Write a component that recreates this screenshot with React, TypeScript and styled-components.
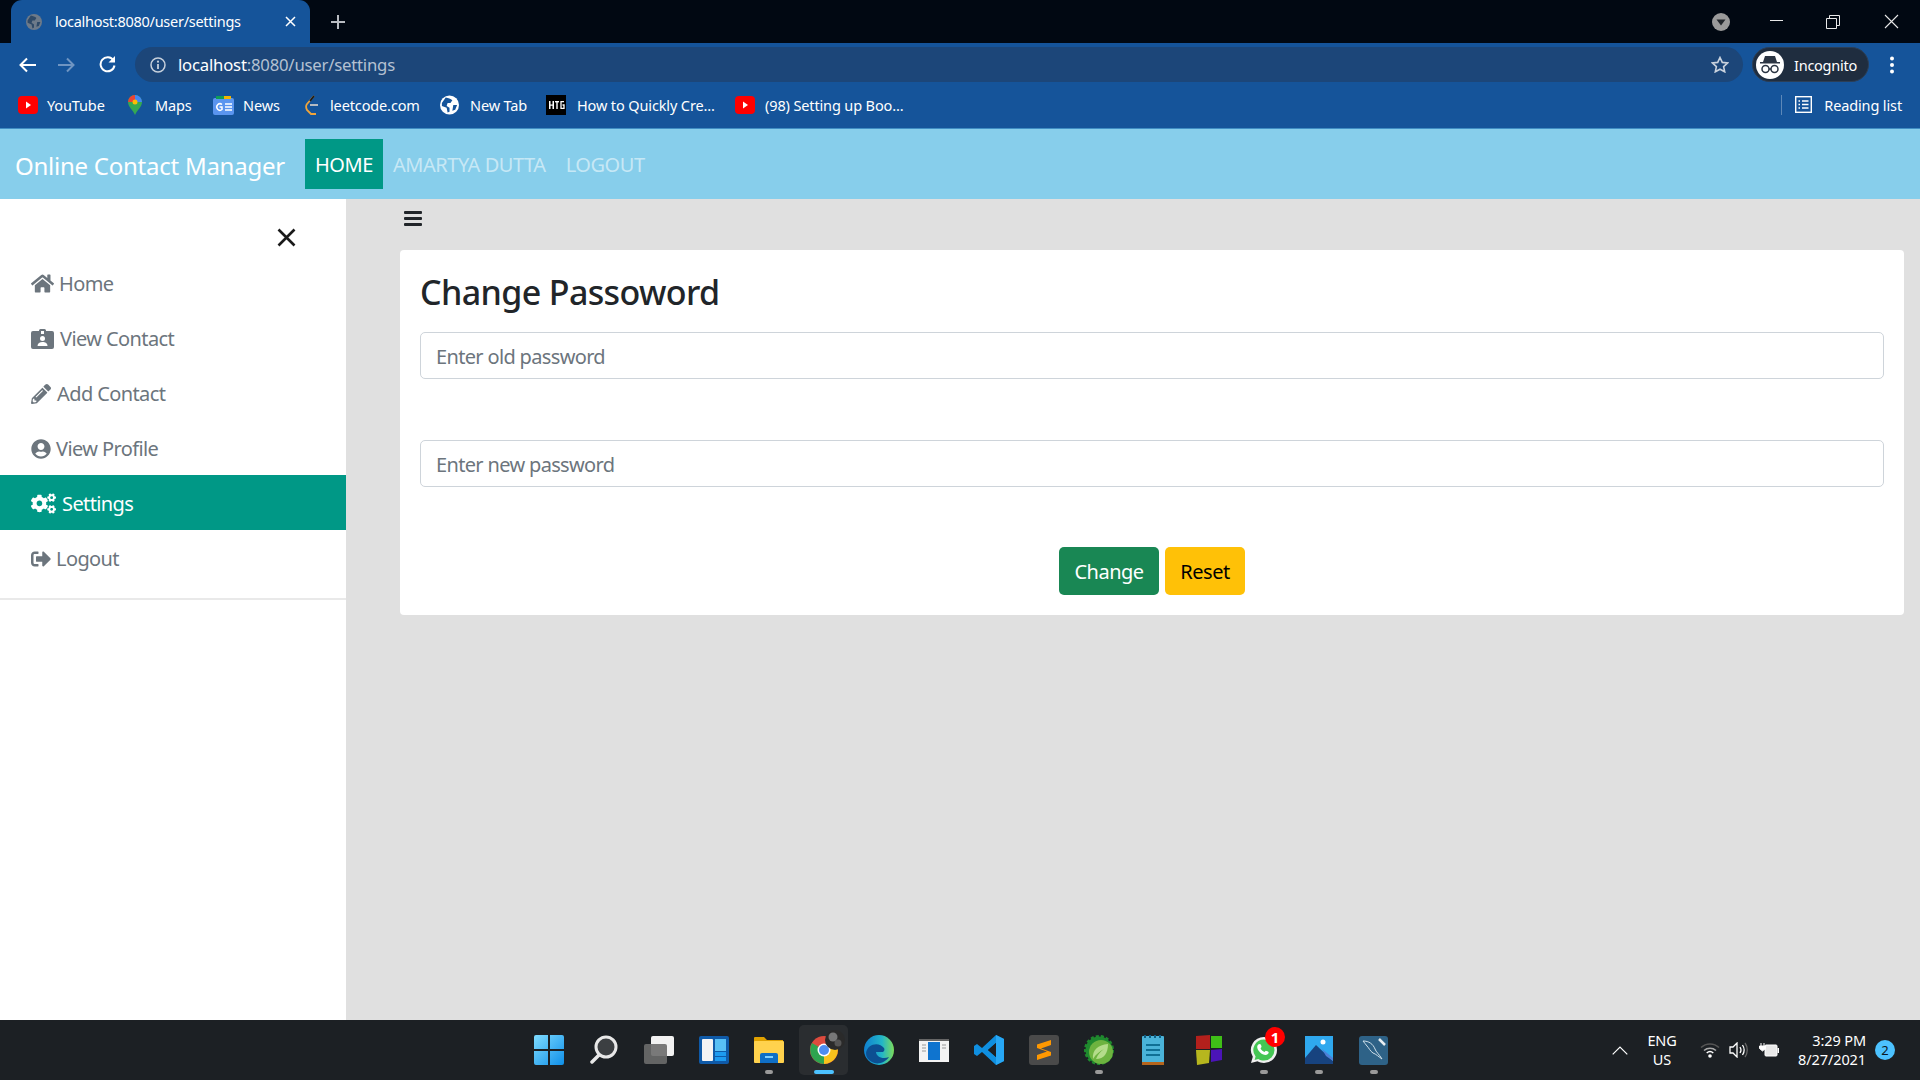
import React from "react";
import styled, { createGlobalStyle } from "styled-components";
import { FaHome, FaPencilAlt, FaUserCircle, FaCogs, FaSignOutAlt } from "react-icons/fa";

const Global = createGlobalStyle`
  html, body { margin: 0; padding: 0; background: #e0e0e0; }
  body { font-family: "Noto Sans", "Open Sans", sans-serif; overflow: hidden; }
  * { box-sizing: border-box; }
  input::placeholder { color: #6c757d; opacity: 1; }
`;

const Page = styled.div`
  width: 1920px; height: 1080px; display: flex; flex-direction: column; overflow: hidden;
`;
const TabStrip = styled.div`
  height: 43px; background: #010812; display: flex; align-items: stretch; padding-left: 11px; flex: none;
`;
const Tab = styled.div`
  width: 299px; background: #15549a; border-radius: 11px 11px 0 0; display: flex; align-items: center;
  padding: 0 14px 0 15px; color: #fff; font-size: 14.5px; letter-spacing: -0.27px;
`;
const TabTitle = styled.span`
  margin-left: 13px; flex: 1; white-space: nowrap; padding-bottom: 2px;
`;
const NewTab = styled.div`
  margin-left: 21px; width: 14px; display: flex; align-items: center; color: #b8bcc2;
`;
const WindowArea = styled.div`
  margin-left: auto; display: flex; align-items: center; padding-right: 21px;
`;
const WinBtn = styled.div<{ $gap?: number }>`
  display: flex; margin-left: ${p => p.$gap ?? 0}px;
`;
const Toolbar = styled.div`
  height: 43px; background: #15549a; display: flex; align-items: center; padding-left: 19px; flex: none;
`;
const NavIcon = styled.div<{ $ml?: number }>`
  display: flex; margin-left: ${p => p.$ml ?? 0}px;
`;
const Omni = styled.div`
  margin-left: 19px; width: 1608px; height: 35px; background: #1c4679; border-radius: 18px; display: flex;
  align-items: center; padding: 0 14px 0 15px;
`;
const Url = styled.div`
  margin-left: 12px; font-size: 16.7px; letter-spacing: -0.2px; color: #b4c1d2; white-space: nowrap; flex: 1;
`;
const UrlHost = styled.span` color: #fff; `;
const Pill = styled.div`
  margin-left: 9px; width: 117px; height: 35px; border-radius: 18px; background: #1f2d3f; border: 1px solid #2c3e55;
  display: flex; align-items: center; padding-left: 3px; color: #fff; font-size: 14.5px; letter-spacing: -0.25px;
`;
const Avatar = styled.div`
  width: 28px; height: 28px; border-radius: 50%; background: #fff; display: flex; align-items: center; justify-content: center; margin-right: 10px; flex: none;
`;
const Kebab = styled.div`
  margin-left: 20px; display: flex;
`;
const Bookmarks = styled.div`
  height: 43px; background: #15549a; border-bottom: 1px solid #3f8ec4; display: flex; align-items: center; padding: 0 18px 5px; color: #fff;
  font-size: 14.5px; letter-spacing: -0.13px; flex: none;
`;
const Bookmark = styled.div<{ $w: number }>`
  width: ${p => p.$w}px; display: flex; align-items: center; white-space: nowrap; flex: none;
`;
const BmIcon = styled.div<{ $w: number }>`
  width: ${p => p.$w}px; display: flex; justify-content: center; flex: none;
`;
const BmLabel = styled.span<{ $ml: number }>`
  margin-left: ${p => p.$ml}px;
`;
const Reading = styled.div`
  margin-left: auto; display: flex; align-items: center; height: 20px; border-left: 1px solid #5d88b8; padding-left: 13px;
`;
const ReadingText = styled.span` margin-left: 12px; `;

const Navbar = styled.header`
  height: 70px; background: #87ceeb; display: flex; align-items: center; padding: 0 0 0 15px; flex: none;
`;
const Brand = styled.div`
  font-size: 24px; color: #fff; width: 290px; letter-spacing: -0.25px; white-space: nowrap; padding-top: 2px;
`;
const NavLink = styled.div<{ $active?: boolean }>`
  height: 50px; display: flex; align-items: center; padding: 0 10px; font-size: 20px; letter-spacing: -0.45px;
  color: ${p => p.$active ? "#fff" : "rgba(255,255,255,.55)"}; background: ${p => p.$active ? "#009886" : "transparent"};
`;
const Body = styled.div`
  flex: 1; display: flex; min-height: 0;
`;
const Side = styled.aside`
  width: 346px; background: #fff; flex: none; display: flex; flex-direction: column;
`;
const CloseRow = styled.div`
  height: 56px; display: flex; justify-content: flex-end; align-items: flex-end; padding: 0 50px 8px 0;
`;
const Menu = styled.nav`
  border-bottom: 2px solid #e9e9e9; padding-bottom: 13px;
`;
const Item = styled.div<{ $active?: boolean; $gap?: number }>`
  height: 55px; display: flex; align-items: center; padding: 2px 0 0 31px; font-size: 20px; letter-spacing: -0.6px;
  color: ${p => p.$active ? "#fff" : "#6c757d"}; background: ${p => p.$active ? "#009886" : "transparent"};
  svg { flex: none; margin-right: ${p => p.$gap ?? 5}px; }
`;
const Main = styled.main`
  flex: 1; background: #e0e0e0; padding: 12px 16px 0 54px; display: flex; flex-direction: column;
`;
const Burger = styled.div`
  height: 15px; width: 18px; margin-left: 4px; display: flex; flex-direction: column; justify-content: space-between; margin-bottom: 24px;
`;
const BurgerBar = styled.span`
  display: block; height: 3px; background: #212529; border-radius: 1px;
`;
const Card = styled.section`
  height: 365px; background: #fff; border-radius: 4px; padding: 20px 20px; display: flex; flex-direction: column;
`;
const Title = styled.h2`
  margin: 0; font-size: 34px; font-weight: 500; color: #212529; line-height: 44px; letter-spacing: -0.62px; height: 62px; flex: none;
`;
const Input = styled.input<{ $mb: number }>`
  height: 47px; width: 100%; border: 1px solid #ced4da; border-radius: 5px; padding: 2px 15px 0; font-size: 20px; letter-spacing: -0.66px;
  font-family: inherit; margin-bottom: ${p => p.$mb}px; background: #fff; flex: none;
`;
const Buttons = styled.div`
  display: flex; justify-content: center; gap: 6px;
`;
const Btn = styled.button<{ $bg: string; $fg: string; $w: number }>`
  height: 48px; width: ${p => p.$w}px; border: 0; border-radius: 5px; background: ${p => p.$bg}; color: ${p => p.$fg};
  font: inherit; font-size: 20px; letter-spacing: -0.5px; padding: 1px 0 0;
`;
const Taskbar = styled.footer`
  height: 60px; background: #1c2024; display: flex; align-items: center; flex: none; padding-left: 521px;
`;
const Slot = styled.div<{ $active?: boolean }>`
  width: 55px; height: 52px; display: flex; align-items: center; justify-content: center; position: relative; flex: none;
  &::before {
    content: ""; position: absolute; top: 1px; bottom: 1px; left: 3px; right: 3px; border-radius: 5px;
    background: ${p => p.$active ? "#2a2d30" : "transparent"};
  }
  svg { position: relative; }
`;
const Dot = styled.span<{ $active?: boolean }>`
  position: absolute; bottom: 2px; left: 50%; transform: translateX(-50%); height: 4px; border-radius: 2px;
  width: ${p => p.$active ? 20 : 8}px; background: ${p => p.$active ? "#4cc2ff" : "#9a9a9a"};
`;
const Badge = styled.span`
  position: absolute; top: 3px; right: 6px; width: 20px; height: 20px; border-radius: 50%; background: #f00; color: #fff;
  font-size: 15px; font-weight: 700; display: flex; align-items: center; justify-content: center;
`;
const Tray = styled.div`
  margin-left: auto; display: flex; align-items: center; color: #fff; font-size: 14.5px; letter-spacing: -0.1px; line-height: 19px; padding-right: 25px;
`;
const TrayIcon = styled.div<{ $ml: number }>`
  display: flex; margin-left: ${p => p.$ml}px;
`;
const Lang = styled.div`
  text-align: center; margin-left: 16px; width: 36px;
`;
const Clock = styled.div`
  text-align: right; margin-left: 19px; white-space: nowrap;
`;
const Notif = styled.div`
  width: 20px; height: 20px; border-radius: 50%; background: #4cc2ff; color: #0b1a24; margin-left: 9px; font-size: 13px;
  display: flex; align-items: center; justify-content: center;
`;

const Yt = () => (
  <svg width="20" height="20" viewBox="0 0 20 20"><rect y="1" width="20" height="18" rx="4" fill="#f00"/><path d="M8 6.500l5 3.500-5 3.500z" fill="#fff"/></svg>
);
const Globe = ({ c = "#fff", s = 20, land = "#15549a" }: { c?: string; s?: number; land?: string }) => (
  <svg width={s} height={s} viewBox="0 0 20 20"><circle cx="10" cy="10" r="10" fill={c}/><path d="M6 2c3 1 5 1 7 3l-2 3-3 0-1 3 3 2 0 4-2 1-1-5-5-2 0-3zM14 10l4 0-2 5-3 1z" fill={land}/></svg>
);

const icons: Record<string, React.ReactNode> = {
  start: (
    <svg width="30" height="30" viewBox="0 0 30 30"><defs><linearGradient id="w" x1="0" y1="0" x2="1" y2="1"><stop offset="0" stopColor="#7fdcff"/><stop offset="1" stopColor="#0f8fe8"/></linearGradient></defs><path d="M0 2a2 2 0 0 1 2-2h12v14H0zM16 0h12a2 2 0 0 1 2 2v12H16zM0 16h14v14H2a2 2 0 0 1-2-2zM16 16h14v12a2 2 0 0 1-2 2H16z" fill="url(#w)"/></svg>
  ),
  search: (
    <svg width="28" height="30" viewBox="0 0 28 30"><circle cx="16" cy="12" r="10" fill="#3c3f42" stroke="#e8e8e8" strokeWidth="3"/><path d="M9 20l-7 7" stroke="#e8e8e8" strokeWidth="3.5" strokeLinecap="round"/></svg>
  ),
  task: (
    <svg width="30" height="28" viewBox="0 0 30 28"><rect x="7" y="0" width="23" height="20" rx="2" fill="#f2f2f2"/><rect x="0" y="8" width="23" height="20" rx="2" fill="#6b6b6b" fillOpacity=".9"/></svg>
  ),
  widgets: (
    <svg width="30" height="28" viewBox="0 0 30 28"><rect width="30" height="28" rx="2" fill="#0f5aa8"/><rect x="3" y="3" width="11" height="22" rx="1" fill="#f4f4f4"/><rect x="16" y="3" width="11" height="12" fill="#58c0f5"/><rect x="16" y="16" width="11" height="4" fill="#1d9bf0"/><rect x="16" y="21" width="11" height="4" fill="#1d9bf0"/></svg>
  ),
  folder: (
    <svg width="32" height="28" viewBox="0 0 32 28"><path d="M1 2a1 1 0 0 1 1-1h9l3 3h16v5H1z" fill="#e0a100"/><rect x="1" y="5" width="30" height="22" rx="1" fill="#ffd24d"/><path d="M9 17h14a2 2 0 0 1 2 2v8H7v-8a2 2 0 0 1 2-2z" fill="#0f6fc6"/><rect x="12" y="20" width="8" height="2" fill="#7fd0ff"/></svg>
  ),
  chrome: (
    <svg width="44" height="44" viewBox="0 0 44 44"><circle cx="22" cy="22" r="14" fill="#dd4b3e"/><path d="M22 22L34 15A14 14 0 0 1 22 36z" fill="#f8c21c"/><path d="M22 22L22 36A14 14 0 0 1 10 15z" fill="#2ea44f"/><circle cx="22" cy="22" r="6.5" fill="#fff"/><circle cx="22" cy="22" r="5" fill="#4d8df0"/><circle cx="33" cy="12" r="10" fill="#2a2a2a"/><circle cx="31" cy="9" r="4.500" fill="#777"/><circle cx="36" cy="15" r="3.500" fill="#555"/></svg>
  ),
  edge: (
    <svg width="30" height="30" viewBox="0 0 30 30"><defs><linearGradient id="e" x1="0" y1="0" x2="1" y2="0"><stop offset="0" stopColor="#0f7fd0"/><stop offset=".6" stopColor="#22b6c8"/><stop offset="1" stopColor="#7ddc5a"/></linearGradient></defs><circle cx="15" cy="15" r="15" fill="url(#e)"/><path d="M2 18C3 9 15 6 20 13c1 2 0 3-1 4h-7c0 4 6 8 13 5-4 6-12 8-17 5C4 25 2 22 2 18z" fill="#0c4f92"/></svg>
  ),
  store: (
    <svg width="30" height="23" viewBox="0 0 30 23"><rect width="30" height="23" fill="#f3f3f3"/><rect width="30" height="2" fill="#666"/><rect x="9" y="3" width="12" height="18" fill="#0f74cf"/><path d="M3 6h4M3 9h4M3 12h4M23 6h4M23 9h4" stroke="#999"/></svg>
  ),
  vscode: (
    <svg width="30" height="30" viewBox="0 0 30 30"><path d="M22 0l8 4v22l-8 4L8 17l-5 4-3-2v-8l3-2 5 4zM22 8l-8 7 8 7z" fill="#0f8fe0"/><path d="M22 0l8 4v22l-8 4z" fill="#27a7f5"/><path d="M22 8l-8 7 8 7z" fill="#1c2024"/></svg>
  ),
  sublime: (
    <svg width="30" height="30" viewBox="0 0 30 30"><rect width="30" height="30" rx="3" fill="#4a4a4a"/><path d="M22 5v5L12 13.500 22 17v3.500L8 25v-5l10-3.500L8 13V9.500z" fill="#ff9800"/></svg>
  ),
  spring: (
    <svg width="30" height="30" viewBox="0 0 30 30"><circle cx="15" cy="15" r="13.500" fill="#1f8a2e" stroke="#1f8a2e" strokeWidth="3" strokeDasharray="3 2"/><circle cx="17" cy="17" r="12" fill="#6db33f"/><path d="M9 24c-1-9 5-14 15-15 0 9-4 15-12 15 2-5 5-8 8-10-4 2-8 5-11 10z" fill="#b4dc8a"/></svg>
  ),
  notes: (
    <svg width="23" height="30" viewBox="0 0 23 30"><rect y="1" width="22" height="28" rx="1" fill="#4ab3d9"/><rect y="27" width="22" height="3" fill="#b5651d"/><path d="M4 10h14M4 15h14M4 20h14" stroke="#0f6f95" strokeWidth="2"/><path d="M3 0v3M8 0v3M13 0v3M18 0v3" stroke="#0f5f85" strokeWidth="2"/></svg>
  ),
  colors: (
    <svg width="28" height="30" viewBox="0 0 28 30"><path d="M1 1l14-1v14H1z" fill="#b3201c"/><path d="M16 1l11 0v12H16z" fill="#3fbf17"/><path d="M1 15h14l-1 13-12 2z" fill="#b6b61e"/><path d="M16 15l11-1v11l-11 2z" fill="#4b14b8"/></svg>
  ),
  whatsapp: (
    <svg width="28" height="28" viewBox="0 0 28 28"><path d="M14 1a13 13 0 0 1 0 26c-2.500 0-4.500-.5-6.500-1.700L1 27l1.800-6.300A13 13 0 0 1 14 1z" fill="#f0f0f0"/><path d="M14 3.500a10.500 10.500 0 0 1 0 21c-2.200 0-4-.6-5.700-1.600l-3.700 1 1-3.500A10.500 10.500 0 0 1 14 3.500z" fill="#45c654"/><path d="M10 8c1 0 1.500 2.500 1.500 3l-1 1.200c.8 1.800 2 3 4 3.800l1.200-1.200c.7 0 3 1 3 1.500 0 2-2 2.700-3 2.700-4 0-8.500-4.500-8.500-8 0-1.200.8-3 2.800-3z" fill="#fff"/></svg>
  ),
  photos: (
    <svg width="28" height="28" viewBox="0 0 28 28"><rect width="28" height="28" fill="#2fa8ee"/><circle cx="18" cy="6" r="2.500" fill="#fff"/><path d="M0 22L11 9l17 16v3H0z" fill="#17437f"/><path d="M17 13l11 9v3l-7-5z" fill="#4e7fd6"/></svg>
  ),
  mysql: (
    <svg width="29" height="29" viewBox="0 0 29 29"><rect width="29" height="29" rx="3" fill="#2e6287"/><path d="M4 5c6 0 10 3 12 8 1 3 4 5 7 10-3-2-6-5-9-6-3-2-4-5-6-7-1-2-3-3-4-5z" fill="none" stroke="#cfe0ea" strokeWidth="1"/><path d="M20 3l6 6" stroke="#e8eef2" strokeWidth="2.500"/></svg>
  ),
};

const taskItems: { k: string; dot?: boolean; active?: boolean; badge?: string }[] = [
  { k: "start" }, { k: "search" }, { k: "task" }, { k: "widgets" },
  { k: "folder", dot: true }, { k: "chrome", active: true, dot: true }, { k: "edge" }, { k: "store" },
  { k: "vscode" }, { k: "sublime" }, { k: "spring", dot: true }, { k: "notes" }, { k: "colors" },
  { k: "whatsapp", dot: true, badge: "1" }, { k: "photos", dot: true }, { k: "mysql", dot: true },
];

const IdBadge = () => (
  <svg width="23" height="20" viewBox="0 0 23 20"><path d="M2 2h6V1.500A1.500 1.500 0 0 1 9.500 0h4A1.500 1.500 0 0 1 15 1.500V2h6a2 2 0 0 1 2 2v14a2 2 0 0 1-2 2H2a2 2 0 0 1-2-2V4a2 2 0 0 1 2-2z" fill="#6c757d"/><rect x="10" y="2" width="3" height="3" fill="#fff"/><circle cx="11.500" cy="9.500" r="2.500" fill="#fff"/><path d="M6.500 17c0-2.800 2.200-4 5-4s5 1.200 5 4z" fill="#fff"/></svg>
);

export default function App() {
  return (
    <Page>
      <Global />
      <TabStrip>
        <Tab>
          <Globe c="#6d7a89" s={16} land="#2f4a68" />
          <TabTitle>localhost:8080/user/settings</TabTitle>
          <svg width="11" height="11" viewBox="0 0 11 11"><path d="M1 1l9 9M10 1l-9 9" stroke="#fff" strokeWidth="1.500"/></svg>
        </Tab>
        <NewTab>
          <svg width="14" height="14" viewBox="0 0 14 14"><path d="M7 0v14M0 7h14" stroke="#b8bcc2" strokeWidth="2"/></svg>
        </NewTab>
        <WindowArea>
          <WinBtn>
            <svg width="18" height="18" viewBox="0 0 18 18"><circle cx="9" cy="9" r="9" fill="#9a9a9a"/><path d="M4.500 6.500h9L9 12.500z" fill="#22262b"/></svg>
          </WinBtn>
          <WinBtn $gap={40}>
            <svg width="14" height="14" viewBox="0 0 14 14"><path d="M0 5.500h13" stroke="#e8e8e8"/></svg>
          </WinBtn>
          <WinBtn $gap={42}>
            <svg width="14" height="14" viewBox="0 0 14 14"><path d="M.5 3.500h10v10H.5zM3.500 3.500V.5h10v10h-3" fill="none" stroke="#e8e8e8"/></svg>
          </WinBtn>
          <WinBtn $gap={44}>
            <svg width="15" height="15" viewBox="0 0 15 15"><path d="M1 1l13 13M14 1L1 14" stroke="#e8e8e8" strokeWidth="1.100"/></svg>
          </WinBtn>
        </WindowArea>
      </TabStrip>
      <Toolbar>
        <NavIcon>
          <svg width="17" height="16" viewBox="0 0 17 16"><path d="M17 8H2M8 1.500L1.500 8 8 14.500" fill="none" stroke="#fff" strokeWidth="2"/></svg>
        </NavIcon>
        <NavIcon $ml={22}>
          <svg width="17" height="16" viewBox="0 0 17 16"><path d="M0 8h15M9 1.500L15.500 8 9 14.500" fill="none" stroke="#6f95c2" strokeWidth="2"/></svg>
        </NavIcon>
        <NavIcon $ml={24}>
          <svg width="17" height="17" viewBox="0 0 17 17"><path d="M14.500 4.500A7 7 0 1 0 15.500 9.500" fill="none" stroke="#fff" strokeWidth="2"/><path d="M16 0v6.500h-6.500z" fill="#fff"/></svg>
        </NavIcon>
        <Omni>
          <svg width="16" height="16" viewBox="0 0 16 16"><circle cx="8" cy="8" r="7" fill="none" stroke="#c6d0dc" strokeWidth="1.500"/><path d="M8 7v5" stroke="#c6d0dc" strokeWidth="1.800"/><circle cx="8" cy="4.700" r="1.100" fill="#c6d0dc"/></svg>
          <Url><UrlHost>localhost</UrlHost>:8080/user/settings</Url>
          <svg width="18" height="17" viewBox="0 0 18 17"><path d="M9 1.500l2.300 4.900 5.200.6-3.900 3.600 1.100 5.200L9 13.200l-4.700 2.600 1.100-5.200L1.500 7l5.200-.6z" fill="none" stroke="#c9d2de" strokeWidth="1.600"/></svg>
        </Omni>
        <Pill>
          <Avatar>
            <svg width="22" height="20" viewBox="0 0 22 20"><path d="M6 1h10l2 6h3v1.500H1V7h3z" fill="#2a3442"/><circle cx="6.500" cy="14" r="3.500" fill="none" stroke="#2a3442" strokeWidth="1.500"/><circle cx="15.500" cy="14" r="3.500" fill="none" stroke="#2a3442" strokeWidth="1.500"/><path d="M10 14h2" stroke="#2a3442" strokeWidth="1.500"/></svg>
          </Avatar>
          Incognito
        </Pill>
        <Kebab>
          <svg width="6" height="18" viewBox="0 0 6 18"><circle cx="3" cy="2.500" r="2" fill="#fff"/><circle cx="3" cy="9" r="2" fill="#fff"/><circle cx="3" cy="15.500" r="2" fill="#fff"/></svg>
        </Kebab>
      </Toolbar>
      <Bookmarks>
        <Bookmark $w={108}><BmIcon $w={20}><Yt /></BmIcon><BmLabel $ml={9}>YouTube</BmLabel></Bookmark>
        <Bookmark $w={87}>
          <BmIcon $w={18}>
            <svg width="18" height="20" viewBox="0 0 18 20"><path d="M9 0a7 7 0 0 1 7 7c0 5-5 8-7 13-2-5-7-8-7-13a7 7 0 0 1 7-7z" fill="#34a853"/><path d="M9 0a7 7 0 0 1 7 7L9 7z" fill="#4285f4"/><path d="M2 7a7 7 0 0 1 7-7v7z" fill="#ea4335"/><circle cx="9" cy="7" r="2.500" fill="#fbbc04"/></svg>
          </BmIcon><BmLabel $ml={11}>Maps</BmLabel>
        </Bookmark>
        <Bookmark $w={90}>
          <BmIcon $w={21}>
            <svg width="21" height="20" viewBox="0 0 21 20"><rect y="3" width="21" height="17" rx="2" fill="#5a95ef"/><path d="M3 1h15v3H3z" fill="#f4b400"/><path d="M3 1h8v3H3z" fill="#0f9d58"/><path d="M12 9h7M12 12h7M12 15h7" stroke="#fff" strokeWidth="1.500"/><path d="M9 9.500A3.200 3.200 0 1 0 9 14.500V12H6.500" fill="none" stroke="#fff" strokeWidth="1.500"/></svg>
          </BmIcon><BmLabel $ml={9}>News</BmLabel>
        </Bookmark>
        <Bookmark $w={137}>
          <BmIcon $w={18}>
            <svg width="14" height="20" viewBox="0 0 14 20"><path d="M9 1L2 9c-1.500 2-1 4 0 6l4 4h5" fill="none" stroke="#f0a43a" strokeWidth="1.800"/><path d="M5 10h8" stroke="#c8c8c8" strokeWidth="1.800"/><path d="M9 1L5 6" stroke="#1a1a1a" strokeWidth="1.800"/></svg>
          </BmIcon><BmLabel $ml={9}>leetcode.com</BmLabel>
        </Bookmark>
        <Bookmark $w={106}><BmIcon $w={19}><Globe /></BmIcon><BmLabel $ml={11}>New Tab</BmLabel></Bookmark>
        <Bookmark $w={189}>
          <BmIcon $w={20}>
            <svg width="20" height="20" viewBox="0 0 20 20"><rect width="20" height="20" fill="#000"/><rect x="3" y="6" width="1.500" height="8" fill="#fff"/><rect x="6.500" y="6" width="1.500" height="8" fill="#fff"/><rect x="3" y="9.500" width="5" height="1.200" fill="#fff"/><rect x="9" y="6" width="4" height="1.400" fill="#fff"/><rect x="10.300" y="6" width="1.400" height="8" fill="#fff"/><path d="M18 6.700h-3v6.600h3V10h-1.500" fill="none" stroke="#fff" strokeWidth="1.300"/></svg>
          </BmIcon><BmLabel $ml={11}>How to Quickly Cre...</BmLabel>
        </Bookmark>
        <Bookmark $w={200}><BmIcon $w={20}><Yt /></BmIcon><BmLabel $ml={10}>(98) Setting up Boo...</BmLabel></Bookmark>
        <Reading>
          <svg width="17" height="17" viewBox="0 0 17 17"><rect x=".7" y=".7" width="15.600" height="15.600" fill="none" stroke="#fff" strokeWidth="1.400"/><path d="M3.500 5h1.500M3.500 8.500h1.500M3.500 12h1.500M7 5h6.500M7 8.500h6.500M7 12h6.500" stroke="#fff" strokeWidth="1.300"/></svg>
          <ReadingText>Reading list</ReadingText>
        </Reading>
      </Bookmarks>
      <Navbar>
        <Brand>Online Contact Manager</Brand>
        <NavLink $active>HOME</NavLink>
        <NavLink>AMARTYA DUTTA</NavLink>
        <NavLink>LOGOUT</NavLink>
      </Navbar>
      <Body>
        <Side>
          <CloseRow>
            <svg width="19" height="19" viewBox="0 0 19 19"><path d="M1.500 1.500l16 16M17.500 1.500l-16 16" stroke="#1a1a1a" strokeWidth="2.600"/></svg>
          </CloseRow>
          <Menu>
            <Item><FaHome size={23} />Home</Item>
            <Item $gap={6}><IdBadge />View Contact</Item>
            <Item $gap={6}><FaPencilAlt size={20} />Add Contact</Item>
            <Item><FaUserCircle size={20} />View Profile</Item>
            <Item $active $gap={6}><FaCogs size={25} />Settings</Item>
            <Item><FaSignOutAlt size={20} />Logout</Item>
          </Menu>
        </Side>
        <Main>
          <Burger><BurgerBar /><BurgerBar /><BurgerBar /></Burger>
          <Card>
            <Title>Change Passoword</Title>
            <Input $mb={61} placeholder="Enter old password" readOnly />
            <Input $mb={60} placeholder="Enter new password" readOnly />
            <Buttons>
              <Btn $bg="#198754" $fg="#fff" $w={100}>Change</Btn>
              <Btn $bg="#ffc107" $fg="#000" $w={80}>Reset</Btn>
            </Buttons>
          </Card>
        </Main>
      </Body>
      <Taskbar>
        {taskItems.map(t => (
          <Slot key={t.k} $active={t.active}>
            {icons[t.k]}
            {t.dot && <Dot $active={t.active} />}
            {t.badge && <Badge>{t.badge}</Badge>}
          </Slot>
        ))}
        <Tray>
          <TrayIcon $ml={0}>
            <svg width="16" height="9" viewBox="0 0 16 9"><path d="M.7 8.300L8 1l7.300 7.300" fill="none" stroke="#fff" strokeWidth="1.200"/></svg>
          </TrayIcon>
          <Lang>ENG<br />US</Lang>
          <TrayIcon $ml={20}>
            <svg width="20" height="16" viewBox="0 0 20 16"><path d="M1 5.500a13 13 0 0 1 18 0" fill="none" stroke="#555" strokeWidth="1.500"/><path d="M4 8.500a9 9 0 0 1 12 0" fill="none" stroke="#aaa" strokeWidth="1.500"/><path d="M6.700 11a5 5 0 0 1 6.600 0" fill="none" stroke="#fff" strokeWidth="1.500"/><circle cx="10" cy="14" r="1.800" fill="#fff"/></svg>
          </TrayIcon>
          <TrayIcon $ml={9}>
            <svg width="20" height="16" viewBox="0 0 20 16"><path d="M1 5h3l4-4v14l-4-4H1z" fill="none" stroke="#fff" strokeWidth="1.300"/><path d="M11 5c1.200 1.800 1.200 4.200 0 6M13.500 3c2 3 2 7 0 10" fill="none" stroke="#fff" strokeWidth="1.300"/><path d="M16 1c3 4 3 10 0 14" fill="none" stroke="#666" strokeWidth="1.300"/></svg>
          </TrayIcon>
          <TrayIcon $ml={10}>
            <svg width="20" height="16" viewBox="0 0 20 16"><rect x="6" y="3" width="12" height="11" rx="1" fill="#e8e8e8" stroke="#fff"/><rect x="18.500" y="6" width="1.500" height="5" fill="#fff"/><path d="M2 1v3M5 1v3M0.500 4h6v2.500L3.500 9 .5 6.500z" stroke="#fff" fill="#fff"/></svg>
          </TrayIcon>
          <Clock>3:29 PM<br />8/27/2021</Clock>
          <Notif>2</Notif>
        </Tray>
      </Taskbar>
    </Page>
  );
}
